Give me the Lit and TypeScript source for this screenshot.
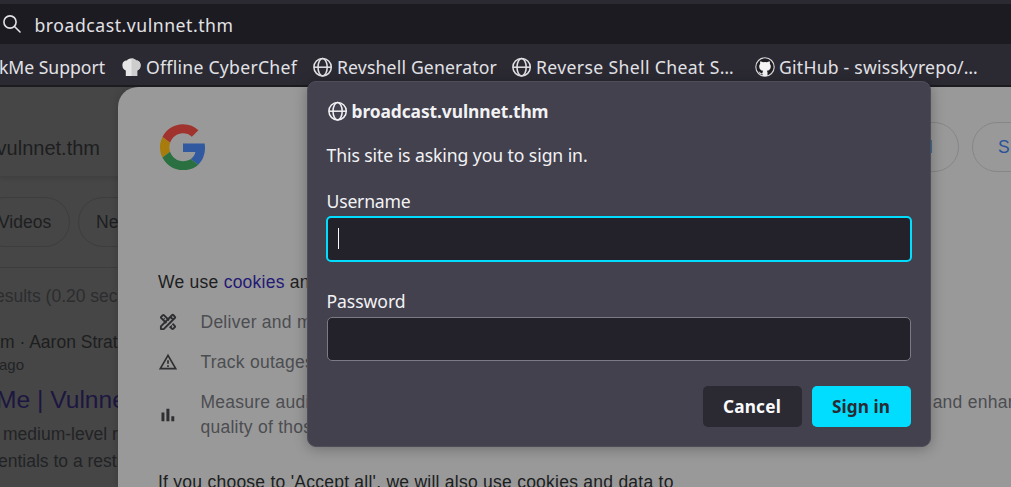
import { LitElement, html, css } from "lit";
import { customElement, property } from "lit/decorators.js";

/** One line of interface text, tracked so that it fills the given width. */
@customElement("fit-text")
class FitText extends LitElement {
  @property() text = "";
  @property({ type: Number }) width = 0;

  static styles = css`
    :host { display: inline-block; white-space: pre; flex: none; }
    span { display: inline-block; }
  `;

  firstUpdated() {
    const span = this.renderRoot.querySelector("span") as HTMLElement;
    const natural = span.getBoundingClientRect().width;
    const step = (this.width - natural) / this.text.length;
    span.style.letterSpacing = `${step.toFixed(3)}px`;
    this.style.width = `${this.width}px`;
  }

  render() {
    return html`<span>${this.text}</span>`;
  }
}

const globe = html`<svg class="globe" viewBox="0 0 20 20" fill="none" stroke="currentColor" stroke-width="1.5">
  <circle cx="9.600" cy="10.200" r="8.700" />
  <ellipse cx="9.600" cy="10.200" rx="4.600" ry="8.700" />
  <path d="M.9 10.200h17.400" />
</svg>`;

const chef = html`<svg class="chef" viewBox="0 0 19 19">
  <path d="M3.800 18V12.400C1.900 12 .4 9.900.4 7.200.4 3.700 2.600 2.300 4.900 2.400 5.900.9 7.700.4 9.500.4s3.600.5 4.600 2c2.300-.1 4.500 1.300 4.500 4.800 0 2.700-1.500 4.800-3.400 5.200V18z" fill="#e6e6e6" />
  <path d="M9.500.4c1.800 0 3.600.5 4.600 2 2.300-.1 4.500 1.300 4.500 4.800 0 2.700-1.500 4.800-3.400 5.200V18H9.500z" fill="#cdcdcd" />
</svg>`;

const octocat = html`<svg class="octocat" viewBox="0 0 20 20">
  <circle cx="10" cy="10" r="9.200" fill="#1f1e25" stroke="#d8d8da" stroke-width="1.100" />
  <path d="M5.400 4.200c1 .1 2 .6 2.700 1.100a9 9 0 0 1 3.800 0c.7-.5 1.700-1 2.700-1.100.4 1 .4 1.900.2 2.600.7.800 1 1.700 1 2.700 0 2.900-1.700 4-4 4.300.5.5.7 1.200.7 2v3.100a9 9 0 0 1-5 0v-1.800c-2 .4-2.700-.6-3.200-1.600l-.7-.7c.9-.2 1.500.4 1.900 1 .5.7 1.100.8 2 .5 0-1 .3-2 .7-2.500-2.300-.3-4-1.400-4-4.300 0-1 .3-1.900 1-2.700-.2-.7-.2-1.600.2-2.600z" fill="#f4f4f5" />
</svg>`;

const magnifier = html`<svg class="magnifier" viewBox="0 0 19 19" fill="none" stroke="currentColor" stroke-width="1.600" stroke-linecap="round">
  <circle cx="7" cy="7" r="6.100" /><path d="M11.500 11.500 17 17" />
</svg>`;

const logo = html`<svg class="logo" viewBox="0 0 48 48">
  <path fill="#a0332d" d="M24 9.500c3.540 0 6.710 1.220 9.210 3.600l6.850-6.850C35.900 2.380 30.470 0 24 0 14.620 0 6.510 5.380 2.560 13.220l7.980 6.190C12.430 13.720 17.740 9.500 24 9.500z" />
  <path fill="#3059a0" d="M46.980 24.550c0-1.570-.15-3.090-.38-4.550H24v9.020h12.940c-.58 2.960-2.260 5.480-4.780 7.180l7.730 6c4.510-4.180 7.090-10.360 7.090-17.650z" />
  <path fill="#a87c0c" d="M10.530 28.590c-.48-1.450-.76-2.990-.76-4.590s.27-3.140.76-4.590l-7.980-6.190C.92 16.460 0 20.120 0 24c0 3.880.92 7.540 2.560 10.780l7.970-6.190z" />
  <path fill="#2a7040" d="M24 48c6.480 0 11.930-2.130 15.890-5.810l-7.730-6c-2.150 1.450-4.920 2.300-8.160 2.300-6.260 0-11.570-4.220-13.470-9.910l-7.980 6.190C6.510 42.620 14.620 48 24 48z" />
</svg>`;

/* Crossed ruler and pencil, outlined. */
const tools = html`<svg class="glyph" viewBox="0 0 20 20" fill="none" stroke="currentColor" stroke-width="1.900" stroke-linejoin="round">
  <path d="M8.300 11.100 3.100 5.900a.7.7 0 0 1 0-1L4.900 3.100a.7.7 0 0 1 1 0L11.100 8.300M11.700 14.500 14.100 16.900a.7.7 0 0 0 1 0L16.900 15.100a.7.7 0 0 0 0-1L14.500 11.700" />
  <path d="M5.200 7.800 6.700 6.300M7.300 9.900 8.300 8.900M12.500 15 14 13.500" stroke-width="1.100" />
  <path d="M2.900 17.100V14.300L14.200 3a.7.7 0 0 1 1 0L17 4.800a.7.7 0 0 1 0 1L5.700 17.100zM12.400 4.900 15.100 7.600" />
</svg>`;

const warning = html`<svg class="glyph" viewBox="0 0 24 24" fill="currentColor">
  <path d="M12 5.990L19.530 19H4.470L12 5.990M12 2L1 21h22L12 2zm1 14h-2v2h2v-2zm0-6h-2v4h2v-4z" />
</svg>`;

const bars = html`<svg class="glyph" viewBox="0 0 24 24" fill="currentColor">
  <path d="M4.200 9h3.500v10.400H4.200zM16 13.500h3.500v5.900H16zM10.100 4.600h3.600v14.800h-3.600z" />
</svg>`;

@customElement("app-root")
class AppRoot extends LitElement {
  static styles = css`
    :host {
      display: flex; flex-direction: column; position: relative;
      width: 1011px; height: 487px; overflow: hidden;
      background: #2b2a33; color: #f2f2f5;
      font: 17.6px/24px "Noto Sans", "Open Sans", sans-serif;
    }
    * { box-sizing: border-box; }
    svg { display: block; flex: none; }
    .globe { width: 20px; height: 20px; }
    .chef { width: 19px; height: 19px; }
    .octocat { width: 20px; height: 20px; }
    .magnifier { width: 19px; height: 19px; }

    .urlbar {
      display: flex; align-items: center; gap: 13px; flex: none;
      height: 40px; margin-top: 4px; padding: 1px 0 0 2.500px;
      background: #1c1b22; color: #e2e2e6;
    }
    .bookmarks {
      display: flex; align-items: center; flex: none;
      height: 43px; color: #e2e2e6;
      border-bottom: 2px solid #1c1b20; white-space: nowrap;
    }
    .mark { display: flex; align-items: center; flex: none; gap: 4px; padding-top: 5px; }
    .mark.first { margin: 0 17px 0 -1px; }
    .mark.wide { gap: 5px; margin-right: 16px; }
    .mark.near { margin-right: 15px; }
    .mark.far { margin-right: 21px; }

    .content {
      display: flex; flex: none; height: 400px; overflow: hidden;
      background: #464646; color: #1d1e20;
      font: 17.5px/24px "Liberation Sans", Arial, sans-serif; white-space: nowrap;
    }
    .results { width: 138px; flex: none; height: 400px; margin-right: -20px; }
    .query {
      display: flex; justify-content: flex-end; height: 90px; padding: 49px 38px 0 0;
      font-size: 20px; border-bottom: 1px solid #404041; box-shadow: 0 2px 4px #00000014;
    }
    .pills { display: flex; gap: 8px; height: 91px; padding-top: 20px; border-bottom: 1px solid #3d3d3e; }
    .pill { height: 50px; line-height: 48px; border: 1px solid #3d3d3f; border-radius: 25px; flex: none; }
    .pill.videos { width: 90px; margin-left: -20px; padding-left: 17px; }
    .pill.news { width: 90px; padding-left: 17px; }
    .count { margin-top: 16px; color: #2c2d2f; margin-left: -5px; }
    .source { margin-top: 22px; }
    .age { font-size: 15px; line-height: 22px; color: #222325; margin-left: -1px; }
    .title { font-size: 24.600px; line-height: 30px; margin-top: 9px; margin-left: -4px; color: #1c1641; }
    .snippet { line-height: 27px; color: #222325; }
    .snippet.one { margin: 6px 0 0 3px; }
    .snippet.two { margin-left: -2px; }

    .sheet {
      flex: 1; height: 400px; padding: 35px 0 0 40px; overflow: hidden;
      background: #99999a; border-radius: 20px 0 0 0; position: relative;
      box-shadow: 0 0 8px #00000030; letter-spacing: 0.250px;
    }
    .top { display: flex; height: 148px; }
    .logo { width: 46px; height: 46.500px; margin: 1.500px 0 0 2px; }
    .actions { display: flex; gap: 13px; margin-left: 613px; }
    .action { height: 50px; line-height: 48px; border: 1px solid #868688; border-radius: 25px; color: #2a5298; flex: none; }
    .action.left { width: 140px; padding-right: 25px; text-align: right; }
    .action.right { width: 110px; padding-left: 25px; }
    .intro { height: 32px; line-height: 24px; }
    .link { color: #241a74; }
    .item { display: flex; align-items: center; height: 40px; color: #4c4d50; }
    .item.tall { height: 65px; line-height: 25px; }
    .glyph { width: 20px; height: 20px; color: #2e2f31; margin-right: 22.500px; }
    .outro { margin-top: 23px; }

    .dialog {
      position: absolute; left: 306.500px; top: 80.500px; width: 624px; height: 366px;
      padding: 17.500px 20px 0 20px; display: flex; flex-direction: column;
      background: #42414d; border: 1px solid #4e4d59; border-radius: 9px;
      box-shadow: 0 2px 14px #00000048;
    }
    .site { display: flex; align-items: center; gap: 4px; font-weight: 700; height: 24px; font-size: 17.400px; }
    .prompt { margin: 20px 0 0 -1px; height: 24px; }
    .label { margin-left: -1px; height: 24px; }
    .label.user { margin-top: 22px; }
    .label.pass { margin-top: 27px; }
    .field { background: #23222b; border-radius: 5px; display: flex; align-items: center; flex: none; }
    .field.focus { height: 46px; margin: 3px -2px 0 -2px; border: 2px solid #00ddff; padding-left: 10px; }
    .field.idle { height: 44px; margin: 4px -1px 0 -1px; border: 1px solid #7b7a85; }
    .caret { width: 1px; height: 21px; margin-bottom: 1px; background: #fbfbfe; }
    .buttons { display: flex; justify-content: flex-end; gap: 10px; margin: 25px -1px 0 0; }
    .button {
      width: 99px; height: 41px; border-radius: 5px; font-weight: 700; font-size: 17.200px;
      display: flex; align-items: center; justify-content: center;
    }
    .button.cancel { background: #2b2a33; color: #fbfbfe; }
    .button.primary { background: #00ddff; color: #2b2a33; }
  `;

  render() {
    return html`
      <div class="urlbar">${magnifier}<fit-text text="broadcast.vulnnet.thm" width="199"></fit-text></div>
      <div class="bookmarks">
        <div class="mark first"><fit-text text="kMe Support" width="106"></fit-text></div>
        <div class="mark wide">${chef}<fit-text text="Offline CyberChef" width="151"></fit-text></div>
        <div class="mark near">${globe}<fit-text text="Revshell Generator" width="160"></fit-text></div>
        <div class="mark far">${globe}<fit-text text="Reverse Shell Cheat S…" width="198"></fit-text></div>
        <div class="mark">${octocat}<fit-text text="GitHub - swisskyrepo/…" width="199"></fit-text></div>
      </div>
      <div class="content">
        <div class="results">
          <div class="query">vulnnet.thm</div>
          <div class="pills">
            <div class="pill videos">Videos</div>
            <div class="pill news">News</div>
          </div>
          <div class="count">esults (0.20 seconds)</div>
          <div class="source">m · Aaron Strat</div>
          <div class="age">ago</div>
          <div class="title">Me | Vulnnet</div>
          <div class="snippet one">medium-level r</div>
          <div class="snippet two">entials to a restri</div>
        </div>
        <div class="sheet">
          <div class="top">
            ${logo}
            <div class="actions">
              <div class="action left">l</div>
              <div class="action right">Sign in</div>
            </div>
          </div>
          <div class="intro">We use <span class="link">cookies</span> and data to</div>
          <div class="item">${tools}<span>Deliver and maintain Google services</span></div>
          <div class="item">${warning}<span>Track outages and protect against spam, fraud, and abuse</span></div>
          <div class="item tall">${bars}<span>Measure audience engagement and site statistics to understand how our services are used and enhance the<br />quality of those services</span></div>
          <div class="outro">If you choose to 'Accept all', we will also use cookies and data to</div>
        </div>
      </div>
      <div class="dialog">
        <div class="site">${globe}<fit-text text="broadcast.vulnnet.thm" width="197"></fit-text></div>
        <div class="prompt"><fit-text text="This site is asking you to sign in." width="261"></fit-text></div>
        <div class="label user"><fit-text text="Username" width="84"></fit-text></div>
        <div class="field focus"><span class="caret"></span></div>
        <div class="label pass"><fit-text text="Password" width="79"></fit-text></div>
        <div class="field idle"></div>
        <div class="buttons">
          <div class="button cancel"><fit-text text="Cancel" width="58"></fit-text></div>
          <div class="button primary"><fit-text text="Sign in" width="58"></fit-text></div>
        </div>
      </div>
    `;
  }
}
